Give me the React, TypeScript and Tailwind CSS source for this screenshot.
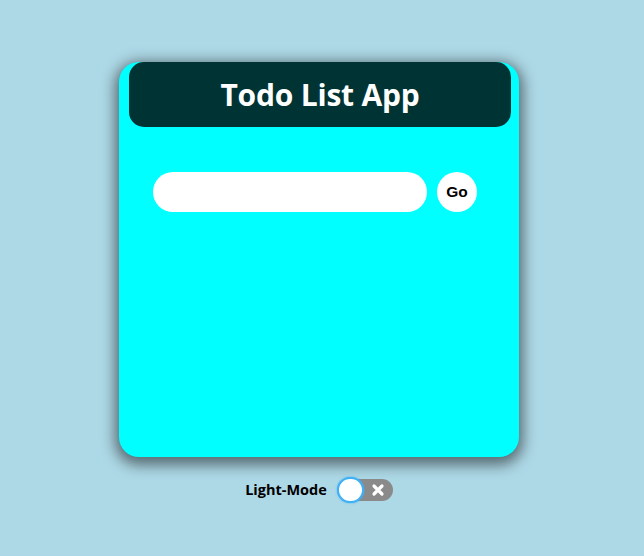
import React from "react";

export default function App() {
  return (
    <div className="min-h-[556px] w-full bg-[#add8e6] flex flex-col items-center pr-[6px] pt-[62px]" style={{ fontFamily: '"Open Sans", sans-serif' }}>
      <div className="w-[400px] h-[395px] bg-[#00ffff] rounded-[20px] shadow-[0_4px_14px_4px_rgba(0,0,0,0.5)] flex flex-col">
        <div className="ml-[10px] w-[382px] h-[65px] bg-[#003333] rounded-[15px] flex items-center justify-center">
          <h1 className="text-white font-bold text-[30px] leading-none tracking-[-0.2px]" style={{ fontFamily: '"Open Sans", sans-serif' }}>Todo List App</h1>
        </div>
        <div className="mt-[45px] ml-[34px] flex items-center gap-[10px]">
          <input className="w-[274px] h-[40px] rounded-full bg-white outline-none px-4" />
          <button className="w-[40px] h-[40px] rounded-full bg-white flex items-center justify-center text-black font-bold text-[15.5px]" style={{ fontFamily: '"Liberation Sans", Arial, sans-serif' }}>Go</button>
        </div>
      </div>
      <div className="mt-[20px] flex items-center gap-[10px]">
        <span className="font-bold text-[14.5px] text-black">Light-Mode</span>
        <div className="relative w-[56px] h-[26px] flex items-center">
          <div className="absolute left-[8px] right-0 top-[2px] h-[22px] rounded-full bg-[#8a8a8a]"></div>
          <div className="absolute left-0 top-0 w-[27px] h-[26px] rounded-full bg-white border-2 border-[#3fb0f5] shadow-[0_0_2px_#3fb0f5]"></div>
          <svg className="absolute left-[34px] top-[6px]" width="14" height="14" viewBox="0 0 14 14">
            <path d="M3 3 L11 11 M11 3 L3 11" stroke="white" strokeWidth="3.2" strokeLinecap="round" />
          </svg>
        </div>
      </div>
    </div>
  );
}
